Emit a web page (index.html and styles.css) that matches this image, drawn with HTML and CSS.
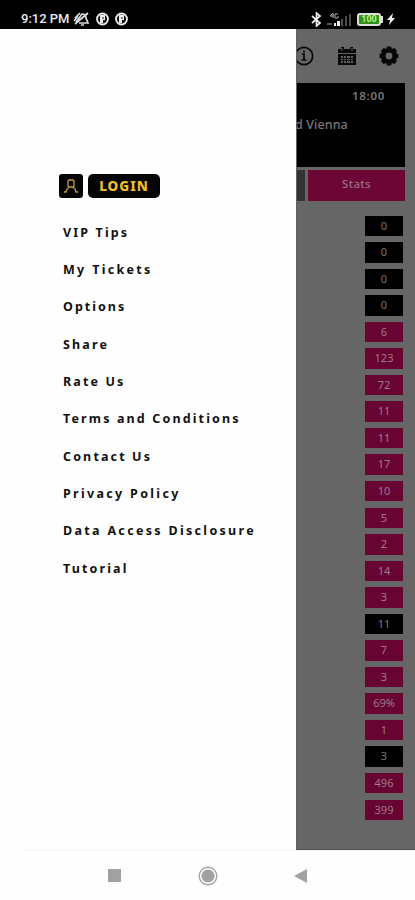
FILE: index.html
```html
<!DOCTYPE html>
<html lang="en">
<head>
<meta charset="utf-8">
<meta name="viewport" content="width=device-width, initial-scale=1">
<title>Menu</title>
<link rel="stylesheet" href="styles.css">
</head>
<body>
<header class="status">
  <span class="clock">9:12 PM</span>
  <svg class="mute" width="17" height="16" viewBox="0 0 17 16" fill="none" stroke="#ddd" stroke-width="1.7"><path d="M3 11 9 3q4 0 4 4l2 5H6M8 14h3M2 7l5-5M2 13 15 2M1 10l4-5"/></svg>
  <svg class="app" width="13" height="14" viewBox="0 0 13 14"><circle cx="6.5" cy="7" r="5.5" fill="#111" stroke="#eee" stroke-width="1.8"/><path d="M4 3h5v5H7v3H4z" fill="#eee"/><path d="M6.500 5h1v2h-1z" fill="#111"/></svg>
  <svg class="app" width="13" height="14" viewBox="0 0 13 14"><circle cx="6.5" cy="7" r="5.5" fill="#111" stroke="#eee" stroke-width="1.8"/><path d="M4 3h5v5H7v3H4z" fill="#eee"/><path d="M6.500 5h1v2h-1z" fill="#111"/></svg>
  <svg class="bt" width="11" height="15" viewBox="0 0 11 15" fill="none" stroke="#eee" stroke-width="1.7"><path d="m1 4 8 7-3.500 3V1L9 4l-8 7"/></svg>
  <svg class="signal" width="25" height="15" viewBox="0 0 25 15"><path d="M3 4 6 1v5M3 4h4M11 2H8v4h3V4" fill="none" stroke="#aaa"/><path d="M0 11h5v2H0z" fill="#555"/><path d="M7 11h2v3H7zM10 9h3v5h-3z" fill="#eee"/><path d="M14 7h2v7h-2zM18 4h2v10h-2zM22 2h2v12h-2z" fill="#4b4b4b"/></svg>
  <span class="battery">100</span>
  <svg class="bolt" width="8" height="12" viewBox="0 0 8 12"><path d="M6 0 0 7h3l-1 5 6-7H5z" fill="#eee"/></svg>
</header>
<main class="screen">
  <aside class="drawer">
    <div class="login">
      <span class="user"><svg width="16" height="16" viewBox="0 0 16 16" fill="none" stroke="#c59a4b" stroke-width="1.3"><path d="M6 2h4l1 1v5l-1 1H6L5 8V3zM1 14h2l1-3 2-2h4l2 2 1 3h2"/></svg></span>
      <span class="button">LOGIN</span>
    </div>
    <nav class="menu">
      <a>VIP Tips</a>
      <a class="wide">My Tickets</a>
      <a class="tight">Options</a>
      <a>Share</a>
      <a>Rate Us</a>
      <a>Terms and Conditions</a>
      <a>Contact Us</a>
      <a class="wide">Privacy Policy</a>
      <a class="wide">Data Access Disclosure</a>
      <a>Tutorial</a>
    </nav>
  </aside>
  <section class="page">
    <div class="tools">
      <svg class="info" width="20" height="20" viewBox="0 0 20 20" fill="none" stroke="#080808" stroke-width="1.7"><circle cx="10" cy="10" r="8.7"/><path d="M8 8h2v6M7.500 14h5M9 5.500h2"/></svg>
      <svg class="calendar" width="18" height="20" viewBox="0 0 18 20"><path d="M0 3h3V1h3v2h6V1h3v2h3v4H0zM0 8h18v11H0z" fill="#080808"/><path d="M3 10h2v2H3zm3 0h2v2H6zm3 0h3v2H9zm4 0h2v2h-2zM3 13h2v1H3zm3 0h2v1H6zm3 0h3v1H9zm4 0h2v1h-2zM3 15h2v2H3zm3 0h2v2H6zm3 0h3v2H9zm4 0h2v2h-2z" fill="#626262"/><path d="M4 2v3M14 2v3" stroke="#626262"/></svg>
      <svg class="gear" width="20" height="20" viewBox="0 0 20 20"><circle cx="10" cy="10" r="5.7" fill="none" stroke="#050505" stroke-width="4.6"/><path d="M10 .6v3M10 16.400v3M.6 10h3M16.400 10h3M3.400 3.400l2 2M14.600 14.600l2 2M3.400 16.600l2-2M14.600 5.400l2-2" stroke="#050505" stroke-width="4.5"/></svg>
    </div>
    <div class="match"><time>18:00</time><span>d Vienna</span></div>
    <div class="tabs"><i></i><b>Stats</b></div>
    <ul class="stats">
      <li class="dark">0</li><li class="dark">0</li><li class="dark">0</li><li class="dark">0</li>
      <li>6</li><li>123</li><li>72</li><li>11</li><li>11</li><li>17</li><li>10</li><li>5</li><li>2</li><li>14</li><li>3</li>
      <li class="dark">11</li><li>7</li><li>3</li><li>69%</li><li>1</li><li class="dark">3</li><li>496</li><li>399</li>
    </ul>
  </section>
</main>
<footer class="navbar">
  <svg width="13" height="13"><path d="M0 0h13v13H0z" fill="#a1a1a1"/></svg>
  <svg class="home" width="20" height="20" viewBox="0 0 20 20"><circle cx="10" cy="10" r="8.8" fill="none" stroke="#a5a5a5" stroke-width="1.4"/><circle cx="10" cy="10" r="6.5" fill="#a1a1a1"/></svg>
  <svg class="back" width="13" height="14"><path d="M13 0v14L0 7z" fill="#a1a1a1"/></svg>
</footer>
</body>
</html>
```
FILE: styles.css
```css
* { box-sizing: border-box; }
body {
  margin: 0;
  width: 415px;
  height: 900px;
  overflow: hidden;
  background: #fefefe;
  font-family: "Noto Sans", sans-serif;
  display: flex;
  flex-direction: column;
}
svg { display: block; flex: none; }

.status {
  height: 29px;
  flex: none;
  background: #000;
  color: #e8e8e8;
  display: flex;
  align-items: center;
  padding: 9px 0 0 21px;
}
.clock {
  width: 52px;
  font: 500 13px/18px Roboto, sans-serif;
  white-space: nowrap;
}
.app { margin-left: 6px; }
.bt { margin-left: auto; margin-right: 5px; }
.signal { margin-right: 5px; }
.battery {
  width: 24px;
  height: 13px;
  border: 2px solid #ddd;
  border-radius: 3px;
  background: #2f8f1a;
  color: #b5f58a;
  font: 700 9px/9px Roboto, sans-serif;
  text-align: center;
  position: relative;
}
.battery::after {
  content: "";
  position: absolute;
  left: 22px;
  top: 1px;
  width: 2px;
  height: 7px;
  background: #ddd;
}
.bolt { margin: 0 20px 0 6px; }

.screen { height: 821px; flex: none; display: flex; }
.drawer {
  width: 296px;
  flex: none;
  background: #fefefe;
  padding-top: 145px;
}
.login { display: flex; gap: 5px; padding-left: 59px; }
.user, .button {
  height: 24px;
  background: #050505;
  border-radius: 3px;
  display: flex;
  align-items: center;
  justify-content: center;
}
.user { width: 24px; }
.button {
  width: 72px;
  border-radius: 5px;
  color: #f2bd2c;
  font-size: 13.5px;
  font-weight: 800;
  letter-spacing: 1px;
  line-height: 22px;
  padding-bottom: 1px;
}
.menu {
  padding: 15.600px 0 0 63px;
  display: flex;
  flex-direction: column;
}
.menu a {
  height: 37.33px;
  line-height: 37.33px;
  font-size: 12.5px;
  font-weight: 700;
  color: #111;
  letter-spacing: 2.14px;
  white-space: nowrap;
}
.menu .wide { letter-spacing: 2.32px; }
.menu .tight { letter-spacing: 2px; }

.page {
  flex: 1;
  background: #666;
  border-left: 1px solid #606060;
  border-bottom: 1px solid #505050;
  overflow: hidden;
}
.tools {
  height: 54px;
  display: flex;
  align-items: center;
  justify-content: flex-end;
  padding-right: 16px;
}
.calendar { margin: 0 23px 0 24px; }
.match {
  height: 84px;
  margin-right: 10px;
  background: #000;
  color: #777;
  display: flex;
  flex-direction: column;
}
.match time {
  align-self: flex-end;
  margin: 4px 20px 0 0;
  font: 600 11.5px/18px "Noto Sans", sans-serif;
  letter-spacing: .7px;
}
.match span {
  margin: 10px 0 0 -2px;
  font: 500 12.5px/20px "Noto Sans", sans-serif;
  letter-spacing: .1px;
}
.tabs {
  margin: 3px 10px 0 0;
  height: 31px;
  display: flex;
  gap: 3px;
}
.tabs i { width: 8px; background: #333; }
.tabs b {
  flex: 1;
  background: #6b0635;
  color: #9c7085;
  font-size: 11.5px;
  line-height: 28px;
  font-weight: 500;
  letter-spacing: .3px;
  text-align: center;
}
.stats {
  list-style: none;
  margin: 14.5px 12px 0 0;
  padding: 0;
  display: flex;
  flex-direction: column;
  align-items: flex-end;
  gap: 6.05px;
}
.stats li {
  width: 38px;
  height: 20.5px;
  flex: none;
  background: #680432;
  color: #a17888;
  font-size: 11px;
  line-height: 20px;
  text-align: center;
}
.stats .dark { background: #000; color: #777; }

.navbar {
  height: 50px;
  margin-left: 22px;
  border-top: 1px solid #f5f5f5;
  display: flex;
  align-items: center;
  padding-left: 86px;
}
.home { margin-left: 77px; }
.back { margin-left: 76px; }
```
